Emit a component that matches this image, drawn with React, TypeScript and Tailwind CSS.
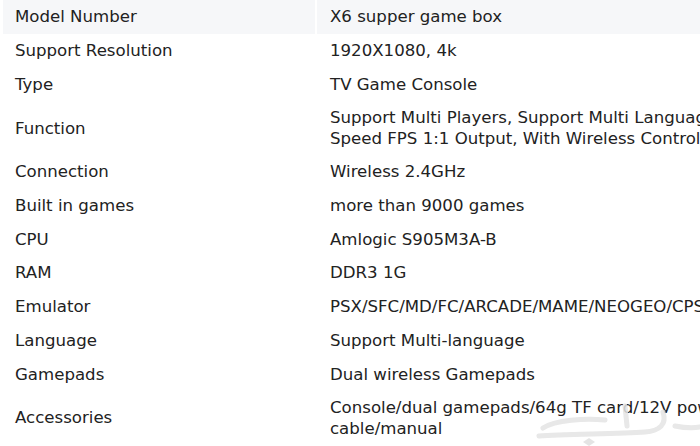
const rows: { label: string; value: string[]; tall?: boolean }[] = [
  { label: "Model Number", value: ["X6 supper game box"] },
  { label: "Support Resolution", value: ["1920X1080, 4k"] },
  { label: "Type", value: ["TV Game Console"] },
  {
    label: "Function",
    value: [
      "Support Multi Players, Support Multi Language, Support Save Game Progress, High",
      "Speed FPS 1:1 Output, With Wireless Controller",
    ],
    tall: true,
  },
  { label: "Connection", value: ["Wireless 2.4GHz"] },
  { label: "Built in games", value: ["more than 9000 games"] },
  { label: "CPU", value: ["Amlogic S905M3A-B"] },
  { label: "RAM", value: ["DDR3 1G"] },
  { label: "Emulator", value: ["PSX/SFC/MD/FC/ARCADE/MAME/NEOGEO/CPS/GBA/N64"] },
  { label: "Language", value: ["Support Multi-language"] },
  { label: "Gamepads", value: ["Dual wireless Gamepads"] },
  {
    label: "Accessories",
    value: ["Console/dual gamepads/64g TF card/12V power supply/HDMI", "cable/manual"],
    tall: true,
  },
];

// faint site watermark in the bottom-right corner
function Watermark() {
  return (
    <svg
      className="absolute left-[535px] top-[398px] pointer-events-none"
      width="165"
      height="48"
      viewBox="0 0 165 48"
      fill="none"
    >
      <g stroke="#e4e4e4" strokeWidth="5" strokeLinecap="round" strokeLinejoin="round" opacity="0.85">
        <path d="M8 30 C20 22 50 20 70 22" />
        <path d="M4 38 C30 36 80 36 110 34 C125 33 132 26 128 14" />
        <path d="M90 8 L92 28" />
        <path d="M140 28 C150 30 160 30 165 29" />
      </g>
      <path d="M48 44 l6 -4 l6 4 l-6 4 z" fill="#e4e4e4" />
    </svg>
  );
}

export default function App() {
  return (
    <div className="relative w-[700px] h-[446px] overflow-hidden bg-white font-['DejaVu_Sans',sans-serif] text-[16.6px] text-[#222]">
      <div className="flex flex-col pl-[3px]">
        {rows.map((r, i) => (
          <div
            key={r.label}
            className={`flex gap-x-[2px] leading-[21px] ${r.tall ? "h-[54px]" : "h-[33.7px]"}`}
          >
            <div
              className={`w-[312px] shrink-0 flex items-center pl-[12px] ${i === 0 ? "bg-[#f6f7f9]" : ""}`}
            >
              {r.label}
            </div>
            <div
              className={`flex-1 min-w-0 flex flex-col justify-center pl-[13px] whitespace-nowrap ${
                i === 0 ? "bg-[#f6f7f9]" : ""
              }`}
            >
              {r.value.map((v) => (
                <span key={v}>{v}</span>
              ))}
            </div>
          </div>
        ))}
      </div>
      <Watermark />
    </div>
  );
}
